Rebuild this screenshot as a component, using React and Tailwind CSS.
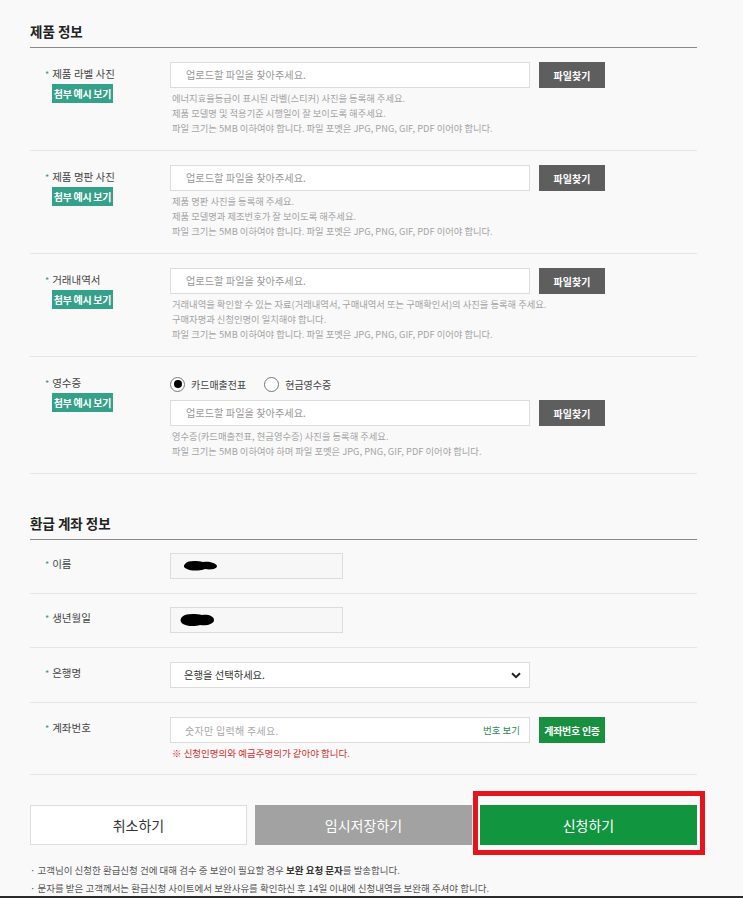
import React from "react";

const FONT = "font-['Noto_Sans_CJK_KR','Noto_Sans',sans-serif]";

function Ast() {
  return <span className="text-[#3b9a72] text-[9px] mr-[3px] leading-none">*</span>;
}

function SectionTitle({ children }) {
  return (
    <div className="border-b border-[#8a8a8a] pb-[7px]">
      <div className="text-[13.5px] leading-[18px] font-bold text-[#222]">{children}</div>
    </div>
  );
}

function LabelCol({ text, example, pt = "pt-[4px]" }) {
  return (
    <div className={`w-[140px] shrink-0 pl-[15px] ${pt} flex flex-col items-start`}>
      <div className="h-[16px] leading-[16px] text-[10.5px] text-[#444] flex items-center">
        <Ast />
        {text}
      </div>
      {example && (
        <div className="mt-[2px] ml-[7px] h-[19px] w-[61px] bg-[#35a189] text-white text-[10px] font-bold flex items-center justify-center tracking-[-0.3px]">
          첨부 예시 보기
        </div>
      )}
    </div>
  );
}

function FileInput() {
  return (
    <div className="flex">
      <div className="w-[360px] h-[26px] bg-white border border-[#dcdcdc] pl-[15px] flex items-center text-[10.2px] text-[#999]">
        업로드할 파일을 찾아주세요.
      </div>
      <div className="ml-[9px] w-[66px] h-[26px] bg-[#5e5e5e] text-white text-[10px] font-bold flex items-center justify-center">
        파일찾기
      </div>
    </div>
  );
}

function Help({ lines }) {
  return (
    <div className="mt-[3px] pl-[2px] text-[9.3px] leading-[15px] text-[#a3a3a3]">
      {lines.map((l, i) => (
        <div key={i}>{l}</div>
      ))}
    </div>
  );
}

function ProductRow({ label, help, radios }) {
  return (
    <div className="flex border-b border-[#e5e5e5] pt-[14px] pb-[14px]">
      <LabelCol text={label} example />
      <div className="flex-1">
        {radios}
        <FileInput />
        <Help lines={help} />
      </div>
    </div>
  );
}

function Radio({ checked, label }) {
  return (
    <div className="flex items-center">
      <div className="w-[15px] h-[15px] rounded-full border border-[#777] bg-white flex items-center justify-center">
        {checked && <div className="w-[8px] h-[8px] rounded-full bg-black" />}
      </div>
      <span className="ml-[6px] text-[10px] text-[#444]">{label}</span>
    </div>
  );
}

function Blob({ d }) {
  return (
    <svg width="40" height="16" viewBox="0 0 40 16">
      <path d={d} fill="#000" />
    </svg>
  );
}

function SimpleRow({ label, children, pt = "pt-[13px]", pb = "pb-[14px]" }) {
  return (
    <div className={`flex border-b border-[#e5e5e5] ${pt} ${pb}`}>
      <LabelCol text={label} pt="pt-[3px]" />
      <div className="flex-1">{children}</div>
    </div>
  );
}

export default function App() {
  return (
    <div className={`${FONT} bg-[#f9f9f9] w-[743px] h-[898px] overflow-hidden relative`}>
      <div className="ml-[30px] w-[667px] pt-[22px]">
        <SectionTitle>제품 정보</SectionTitle>

        <ProductRow
          label="제품 라벨 사진"
          help={[
            "에너지효율등급이 표시된 라벨(스티커) 사진을 등록해 주세요.",
            "제품 모델명 및 적용기준 시행일이 잘 보이도록 해주세요.",
            "파일 크기는 5MB 이하여야 합니다. 파일 포멧은 JPG, PNG, GIF, PDF 이어야 합니다.",
          ]}
        />
        <ProductRow
          label="제품 명판 사진"
          help={[
            "제품 명판 사진을 등록해 주세요.",
            "제품 모델명과 제조번호가 잘 보이도록 해주세요.",
            "파일 크기는 5MB 이하여야 합니다. 파일 포멧은 JPG, PNG, GIF, PDF 이어야 합니다.",
          ]}
        />
        <ProductRow
          label="거래내역서"
          help={[
            "거래내역을 확인할 수 있는 자료(거래내역서, 구매내역서 또는 구매확인서)의 사진을 등록해 주세요.",
            "구매자명과 신청인명이 일치해야 합니다.",
            "파일 크기는 5MB 이하여야 합니다. 파일 포멧은 JPG, PNG, GIF, PDF 이어야 합니다.",
          ]}
        />
        <ProductRow
          label="영수증"
          radios={
            <div className="h-[26px] flex items-center gap-[18px] mb-[3px]">
              <Radio checked label="카드매출전표" />
              <Radio label="현금영수증" />
            </div>
          }
          help={[
            "영수증(카드매출전표, 현금영수증) 사진을 등록해 주세요.",
            "파일 크기는 5MB 이하여야 하며 파일 포멧은 JPG, PNG, GIF, PDF 이어야 합니다.",
          ]}
        />

        <div className="mt-[40px]">
          <SectionTitle>환급 계좌 정보</SectionTitle>
        </div>

        <SimpleRow label="이름">
          <div className="w-[173px] h-[26px] bg-[#f7f7f7] border border-[#dcdcdc] pl-[12px] flex items-center">
            <Blob d="M2 6 C5 2 14 3 20 4 C26 3 33 5 34 8 C34 11 28 12 22 11 C16 13 8 13 4 11 C1 10 0 8 2 6 Z" />
          </div>
        </SimpleRow>
        <SimpleRow label="생년월일">
          <div className="w-[173px] h-[26px] bg-[#f7f7f7] border border-[#dcdcdc] pl-[9px] flex items-center">
            <Blob d="M2 5 C6 1 16 2 22 3 C28 2 34 4 34 8 C34 12 27 14 20 13 C14 15 6 14 3 12 C0 10 0 7 2 5 Z" />
          </div>
        </SimpleRow>
        <SimpleRow label="은행명" pt="pt-[14px]">
          <div className="w-[360px] h-[26px] bg-white border border-[#dcdcdc] pl-[13px] pr-[8px] flex items-center justify-between text-[10.3px] text-[#333]">
            <span>은행을 선택하세요.</span>
            <svg width="10" height="7" viewBox="0 0 10 7">
              <path d="M1 1.2 L5 5.2 L9 1.2" fill="none" stroke="#222" strokeWidth="2" />
            </svg>
          </div>
        </SimpleRow>
        <SimpleRow label="계좌번호" pt="pt-[14px]" pb="pb-[13px]">
          <div className="flex">
            <div className="w-[360px] h-[26px] bg-white border border-[#dcdcdc] pl-[14px] pr-[9px] flex items-center justify-between">
              <span className="text-[10px] text-[#aaa] tracking-[0.3px]">숫자만 입력해 주세요.</span>
              <span className="text-[9.5px] text-[#2d8a55]">번호 보기</span>
            </div>
            <div className="ml-[9px] w-[66px] h-[26px] bg-[#18903f] text-white text-[10px] font-bold flex items-center justify-center tracking-[-0.3px]">
              계좌번호 인증
            </div>
          </div>
          <div className="mt-[3px] pl-[2px] text-[9.5px] leading-[15px] text-[#d0302f]">
            ※ 신청인명의와 예금주명의가 같아야 합니다.
          </div>
        </SimpleRow>

        <div className="mt-[30px] grid grid-cols-3 gap-[8px]">
          <div className="h-[40px] bg-white border border-[#dddddd] flex items-center justify-center text-[14px] text-[#333]">
            취소하기
          </div>
          <div className="h-[40px] bg-[#a2a2a2] flex items-center justify-center text-[14px] text-white">
            임시저장하기
          </div>
          <div className="relative">
            <div className="h-[40px] bg-[#11953f] flex items-center justify-center text-[14px] text-white">
              신청하기
            </div>
            <div className="absolute left-[-7px] top-[-14px] right-[-8px] bottom-[-10px] border-[5px] border-[#e3161f]" />
          </div>
        </div>

        <div className="mt-[16px] text-[9.5px] leading-[18px] text-[#555]">
          <div>
            · 고객님이 신청한 환급신청 건에 대해 검수 중 보완이 필요할 경우{" "}
            <b className="text-[#333]">보완 요청 문자</b>를 발송합니다.
          </div>
          <div>· 문자를 받은 고객께서는 환급신청 사이트에서 보완사유를 확인하신 후 14일 이내에 신청내역을 보완해 주셔야 합니다.</div>
        </div>
      </div>
      <div className="absolute left-0 right-0 bottom-0 h-[2px] bg-[#2a2a2a]" />
    </div>
  );
}
